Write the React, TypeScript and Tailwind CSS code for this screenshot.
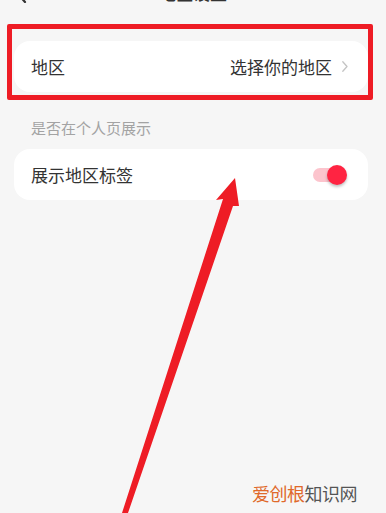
import React from "react";

export default function App() {
  const font = { fontFamily: '"Noto Sans CJK SC", "Noto Sans", sans-serif' };
  return (
    <div
      className="relative w-[386px] h-[513px] overflow-hidden bg-[#f6f6f6] text-[#333333]"
      style={font}
    >
      {/* header (mostly scrolled off the top) */}
      <div className="relative -mt-[17px] h-[20px] flex items-center justify-center">
        <svg
          className="absolute left-[14px] top-[2px]"
          width="14"
          height="18"
          viewBox="0 0 14 18"
          fill="none"
        >
          <path d="M11 1 L4 9 L11 17" stroke="#333" strokeWidth="2.2" strokeLinecap="round" strokeLinejoin="round" />
        </svg>
        <span className="text-[17px] leading-[20px] font-medium text-[#333]">地区设置</span>
      </div>

      {/* card 1 */}
      <div className="mt-[38px] ml-[14px] w-[354px] h-[51px] bg-white rounded-[16px] flex items-center pl-[17px] pr-[20px]">
        <span className="text-[17px] leading-none">地区</span>
        <div className="ml-auto flex items-center gap-[10px]">
          <span className="text-[17px] leading-none">选择你的地区</span>
          <svg width="6" height="11" viewBox="0 0 6 11" fill="none">
            <path d="M0.8 0.8 L5 5.5 L0.8 10.2" stroke="#c4c4c4" strokeWidth="1.3" strokeLinecap="round" strokeLinejoin="round" />
          </svg>
        </div>
      </div>

      {/* section label */}
      <div className="mt-[26px] pl-[31px] h-[20px] flex items-center text-[15px] text-[#a3a3a3]">
        是否在个人页展示
      </div>

      {/* card 2 */}
      <div className="mt-[11px] ml-[14px] w-[354px] h-[51px] bg-white rounded-[16px] flex items-center pl-[17px] pr-[21px]">
        <span className="text-[17px] leading-none">展示地区标签</span>
        <div className="ml-auto relative w-[34px] h-[22px] flex items-center">
          <div className="w-[30px] h-[14px] rounded-full bg-[#fcc4cd]" />
          <div className="absolute right-0 top-[1px] w-[20px] h-[20px] rounded-full bg-[#ff2442] shadow-[0_2px_3px_rgba(0,0,0,0.25)]" />
        </div>
      </div>

      {/* red annotation box */}
      <div className="absolute left-[7px] top-[24px] w-[366px] h-[76px] border-[5px] border-[#ee1c25] rounded-[2px]" />

      {/* red annotation arrow */}
      <svg className="absolute left-0 top-0" width="386" height="513" viewBox="0 0 386 513">
        <polygon
          points="235,178 216,200 223,199 122,513 128,513 233,206 239,206"
          fill="#ee1c25"
        />
      </svg>

      {/* watermark */}
      <div className="absolute left-[252px] top-[482px] text-[18px] leading-[22px] tracking-[-0.5px]">
        <span className="text-[#e0692a]">爱创根</span>
        <span className="text-[#555555]">知识网</span>
      </div>
    </div>
  );
}
